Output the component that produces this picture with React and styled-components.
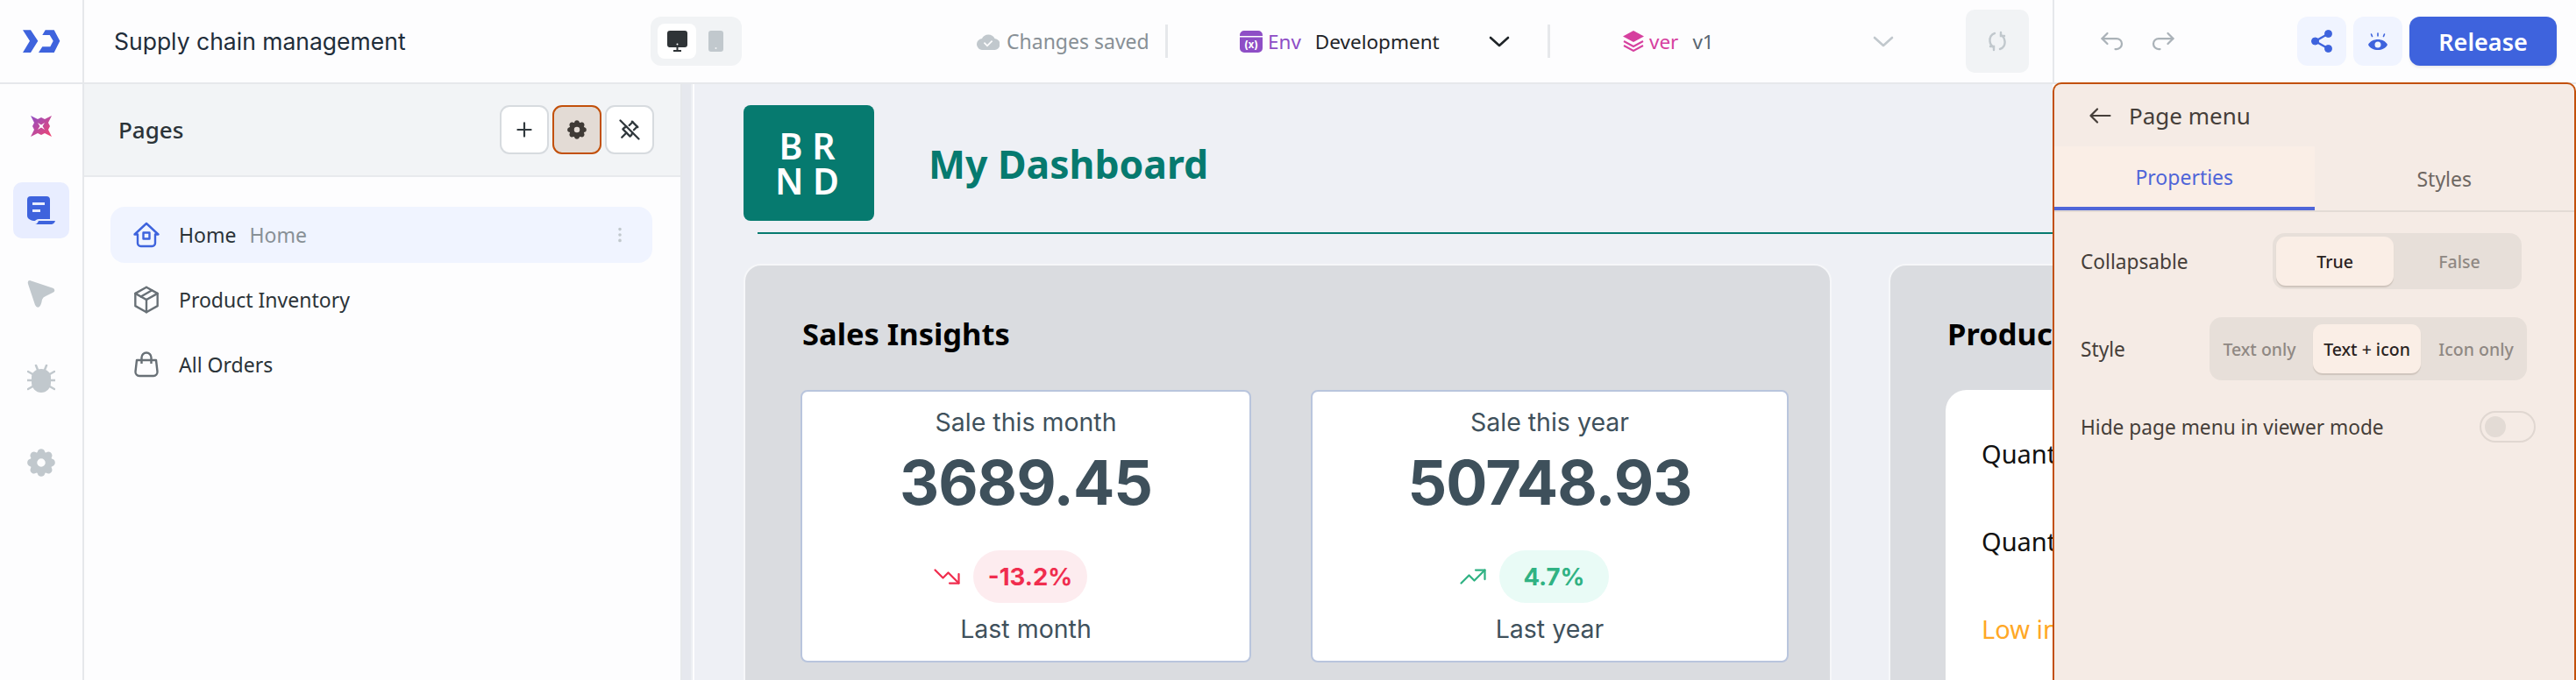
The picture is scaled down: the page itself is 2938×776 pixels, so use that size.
import React from "react";
import styled, { createGlobalStyle } from "styled-components";
import {
  TbPlus,
  TbSettingsFilled,
  TbPinnedOff,
  TbPackage,
  TbArrowBackUp,
  TbArrowForwardUp,
  TbTrendingUp,
  TbTrendingDown,
  TbDotsVertical,
} from "react-icons/tb";

const UI_FONT = `"Noto Sans", "Liberation Sans", sans-serif`;
const BLUE = "#3e63dd";
const TEAL = "#067a6f";

const Global = createGlobalStyle`
  html, body, #root {
    margin: 0;
    height: 100%;
    overflow: hidden;
  }
  body {
    font-family: ${UI_FONT};
    background: #fdfdfe;
  }
  * {
    box-sizing: border-box;
  }
`;

const Shell = styled.div`
  height: 776px;
  display: flex;
  flex-direction: column;
  overflow: hidden;
`;

const TopBar = styled.header`
  height: 96px;
  flex: none;
  display: flex;
  background: #fdfdfe;
  border-bottom: 2px solid #e6e8eb;
`;

const LogoCell = styled.div`
  width: 96px;
  flex: none;
  display: flex;
  align-items: center;
  justify-content: center;
  border-right: 2px solid #e6e8eb;
`;

const AppName = styled.div`
  width: 612px;
  margin-left: 34px;
  flex: none;
  align-self: center;
  font-family: Inter, sans-serif;
  font-size: 26.5px;
  color: #1f2d3a;
`;

const DeviceSwitch = styled.div`
  width: 104px;
  height: 56px;
  margin-top: 19px;
  padding: 8px;
  flex: none;
  display: flex;
  gap: 14px;
  align-items: center;
  background: #f1f3f5;
  border-radius: 12px;
`;

const DeviceTab = styled.div`
  width: ${(p) => (p.$active ? "44px" : "17px")};
  height: 40px;
  display: flex;
  align-items: center;
  justify-content: center;
  border-radius: 8px;
  background: ${(p) => (p.$active ? "#fff" : "transparent")};
`;

const SaveState = styled.div`
  margin-left: 268px;
  width: 215px;
  flex: none;
  display: flex;
  align-items: center;
  gap: 8px;
  font-size: 23px;
  color: #889096;
`;

const Divider = styled.div`
  width: 3px;
  height: 38px;
  flex: none;
  align-self: center;
  background: #e6e8eb;
`;

const EnvGroup = styled.div`
  margin: 0 ${(p) => p.$mr}px 0 ${(p) => p.$ml}px;
  width: ${(p) => p.$w}px;
  flex: none;
  display: flex;
  align-items: center;
  font-size: 22.5px;
  color: #1f2428;
`;

const EnvLabel = styled.span`
  margin: 0 ${(p) => p.$gap}px 0 6px;
  color: ${(p) => p.$color};
`;

const EnvValue = styled.span`
  flex: 1;
  color: ${(p) => p.$color};
`;

const SyncButton = styled.button`
  width: 72px;
  height: 72px;
  margin-top: 11px;
  padding: 0;
  flex: none;
  border: 0;
  border-radius: 10px;
  background: #f1f3f5;
  display: flex;
  align-items: center;
  justify-content: center;
`;

const Actions = styled.div`
  margin-left: 27px;
  flex: 1;
  display: flex;
  align-items: center;
  border-left: 2px solid #e6e8eb;
  padding-left: 47px;
  padding-right: 22px;
`;

const History = styled.div`
  display: flex;
  gap: 24px;
  margin-right: auto;
  color: #aab2b8;
`;

const SoftButton = styled.button`
  width: 56px;
  height: 56px;
  margin-right: 8px;
  padding: 0;
  border: 0;
  border-radius: 12px;
  background: #f0f4ff;
  display: flex;
  align-items: center;
  justify-content: center;
`;

const ReleaseButton = styled.button`
  width: 168px;
  height: 56px;
  padding: 0;
  border: 0;
  border-radius: 12px;
  background: ${BLUE};
  box-shadow: 0 2px 3px rgba(0, 0, 0, 0.08);
  color: #fff;
  font-family: ${UI_FONT};
  font-size: 27px;
  font-weight: 600;
`;

const Body = styled.div`
  flex: 1;
  min-height: 0;
  display: flex;
`;

const Rail = styled.nav`
  width: 96px;
  flex: none;
  padding-top: 16px;
  display: flex;
  flex-direction: column;
  align-items: center;
  gap: 32px;
  border-right: 2px solid #e6e8eb;
  background: #fdfdfe;
`;

const RailItem = styled.div`
  width: 64px;
  height: 64px;
  display: flex;
  align-items: center;
  justify-content: center;
  border-radius: 10px;
  background: ${(p) => (p.$active ? "#e8edff" : "transparent")};
`;

const PagesPanel = styled.aside`
  width: 682px;
  flex: none;
  display: flex;
  flex-direction: column;
  background: #fdfdfe;
  border-right: 2px solid #e6e8eb;
`;

const PagesHead = styled.div`
  height: 106px;
  flex: none;
  padding: 0 30px 0 39px;
  display: flex;
  align-items: center;
  gap: 4px;
  background: #f2f4f6;
  border-bottom: 2px solid #e8eaed;
`;

const PagesTitle = styled.div`
  margin-right: auto;
  font-size: 26px;
  font-weight: 500;
  color: #2b3338;
`;

const IconButton = styled.button`
  width: 56px;
  height: 56px;
  padding: 0;
  border-radius: 11px;
  border: 2px solid ${(p) => (p.$on ? "#c2500a" : "#d7dbdf")};
  background: ${(p) => (p.$on ? "#e3dbd5" : "#fff")};
  color: ${(p) => (p.$on ? "#3f3a36" : "#30383d")};
  display: flex;
  align-items: center;
  justify-content: center;
`;

const PageList = styled.div`
  padding: 34px 32px 34px 30px;
  display: flex;
  flex-direction: column;
  gap: 10px;
`;

const PageRow = styled.div`
  height: 64px;
  padding: 0 26px 0 25px;
  display: flex;
  align-items: center;
  border-radius: 16px;
  background: ${(p) => (p.$active ? "#f0f4ff" : "transparent")};
  color: ${(p) => (p.$active ? BLUE : "#687076")};
`;

const PageIcon = styled.span`
  width: 32px;
  height: 32px;
  flex: none;
  display: flex;
  align-items: center;
  justify-content: center;
`;

const PageName = styled.span`
  margin-left: 21px;
  font-size: 23px;
  color: #2b3338;
`;

const PageSlug = styled.span`
  margin-left: 15px;
  margin-right: auto;
  font-size: 23px;
  color: #889096;
`;

const Gutter = styled.div`
  width: 12px;
  flex: none;
  background: #e6e8ee;
  border-right: 2px solid #edeff3;
  margin-right: 2px;
`;

const Canvas = styled.main`
  flex: 1;
  min-width: 0;
  overflow: hidden;
  padding: 24px 0 0 56px;
  background: #eef0f5;
`;

const BrandRow = styled.div`
  display: flex;
  align-items: center;
  gap: 62px;
`;

const BrandMark = styled.div`
  width: 149px;
  height: 132px;
  flex: none;
  padding-right: 4px;
  display: flex;
  flex-direction: column;
  align-items: center;
  justify-content: center;
  border-radius: 8px;
  background: ${TEAL};
  color: #fff;
  font-size: 41px;
  font-weight: 600;
  line-height: 40px;
  white-space: pre;
`;

const BrandTitle = styled.div`
  font-size: 44.5px;
  font-weight: 700;
  color: ${TEAL};
`;

const BrandRule = styled.div`
  height: 2px;
  margin: 13px 0 34px 16px;
  background: ${TEAL};
`;

const CardRow = styled.div`
  display: flex;
  gap: 65px;
`;

const Card = styled.section`
  width: ${(p) => p.$w}px;
  height: 520px;
  flex: none;
  padding: 53px 50px 0 63px;
  border: 2px solid #f6f7f9;
  border-radius: 20px;
  background: #dadce0;
`;

const CardTitle = styled.h2`
  margin: 0 0 39px 2px;
  height: 50px;
  font-size: 34.5px;
  line-height: 50px;
  font-weight: 700;
  color: #000;
  white-space: nowrap;
`;

const StatRow = styled.div`
  display: flex;
  gap: 68px;
`;

const Stat = styled.div`
  width: ${(p) => p.$w}px;
  height: 311px;
  flex: none;
  padding-top: 14px;
  display: flex;
  flex-direction: column;
  align-items: center;
  border: 2px solid #b9c5dd;
  border-radius: 8px;
  background: #fff;
  font-family: Inter, sans-serif;
  color: #3f515c;
`;

const StatLabel = styled.div`
  font-size: 28.5px;
  line-height: 42px;
`;

const StatValue = styled.div`
  margin-top: 4px;
  font-size: 70px;
  line-height: 88px;
  font-weight: 700;
  letter-spacing: -1px;
  color: #3e505b;
`;

const Trend = styled.div`
  margin: 33px 38px 9px 0;
  height: 60px;
  display: flex;
  align-items: center;
  gap: 12px;
  color: ${(p) => p.$color};
`;

const Badge = styled.span`
  height: 60px;
  padding: 0 ${(p) => p.$pad}px;
  display: flex;
  align-items: center;
  border-radius: 30px;
  background: ${(p) => p.$bg};
  font-size: 27.5px;
  font-weight: 700;
`;

const StockCard = styled.div`
  width: 400px;
  height: 400px;
  padding: 51px 41px;
  display: flex;
  flex-direction: column;
  gap: 56px;
  border-radius: 24px;
  background: #fff;
`;

const StockLine = styled.div`
  font-size: 29px;
  line-height: 44px;
  white-space: nowrap;
  color: ${(p) => p.$color || "#111"};
`;

const Inspector = styled.aside`
  width: 597px;
  flex: none;
  margin-top: -2px;
  position: relative;
  display: flex;
  flex-direction: column;
  border: 2px solid #c2500a;
  border-bottom: 0;
  border-radius: 10px 10px 0 0;
  background: #f5ebe5;
  color: #453e39;
`;

const InspectorHead = styled.div`
  height: 71px;
  padding: 1px 0 0 40px;
  display: flex;
  align-items: center;
  gap: 20px;
  font-size: 26px;
`;

const Tabs = styled.div`
  height: 75px;
  display: flex;
  border-bottom: 2px solid #e3dbd5;
`;

const Tab = styled.div`
  width: 298px;
  height: 73px;
  padding-top: 1px;
  display: flex;
  align-items: center;
  justify-content: center;
  font-size: 23px;
  background: ${(p) => (p.$active ? "#faeee6" : "transparent")};
  border-bottom: ${(p) => (p.$active ? "4px solid #4f65d8" : "0")};
  color: ${(p) => (p.$active ? "#4f65d8" : "#6e6762")};
`;

const Field = styled.div`
  height: ${(p) => p.$h}px;
  margin-top: ${(p) => p.$mt}px;
  padding: 0 ${(p) => p.$pr}px 0 30px;
  display: flex;
  align-items: center;
  justify-content: space-between;
  font-size: 22.7px;
`;

const Segments = styled.div`
  width: ${(p) => p.$w}px;
  height: 100%;
  padding: ${(p) => p.$pad}px 4px;
  display: flex;
  align-items: stretch;
  border-radius: 14px;
  background: #e7dfd9;
`;

const Segment = styled.div`
  width: ${(p) => p.$w}px;
  padding: 0 ${(p) => p.$nudgeR || 0}px 0 ${(p) => p.$nudgeL || 0}px;
  display: flex;
  align-items: center;
  justify-content: center;
  border-radius: 11px;
  font-size: 19.5px;
  font-weight: 500;
  color: ${(p) => (p.$on ? "#2a231f" : "#8f8883")};
  background: ${(p) => (p.$on ? "#faeee6" : "transparent")};
  box-shadow: ${(p) => (p.$on ? "0 2px 1px #cfc5bd" : "none")};
`;

const Toggle = styled.div`
  width: 64px;
  height: 36px;
  padding: 4px;
  border: 2px solid #e0d7d1;
  border-radius: 18px;
`;

const Knob = styled.div`
  width: 24px;
  height: 24px;
  border-radius: 12px;
  background: #e3dbd5;
`;

const Logo = () => (
  <svg width="43" height="28" viewBox="0 0 43 28" fill={BLUE}>
    <path d="M0 1.300h9l8.300 12.400L9 27H0l8-13.300z" />
    <path d="M25.700 1.300h10l6.600 12.400L35.700 27H18l4.300-6.700h9l3.400-6.600-4-6.700h-8.400z" />
  </svg>
);

const SparkIcon = () => (
  <svg width="26" height="26" viewBox="0 0 26 26">
    <defs>
      <linearGradient id="spark" x1="0" y1="0" x2="1" y2="1">
        <stop offset="0" stopColor="#8e4ec6" />
        <stop offset="1" stopColor="#f3456f" />
      </linearGradient>
    </defs>
    <path
      fillRule="evenodd"
      fill="url(#spark)"
      d="M1 1L9 5L13 3L17 5L25 1L21 9L23 13L21 17L25 25L17 21L13 23L9 21L1 25L5 17L3 13L5 9ZM9 9L13 11.500L17 9L14.500 13L17 17L13 14.500L9 17L11.500 13Z"
    />
  </svg>
);

const ScrollIcon = () => (
  <svg width="32" height="32" viewBox="0 0 32 32" fill={BLUE}>
    <path
      fillRule="evenodd"
      d="M4 0h18a4 4 0 0 1 4 4v22H13c-2 0-3 1-4 2-4 0-9-2-9-6V4a4 4 0 0 1 4-4zm2 7v3h14V7zm0 8v3h9v-3z"
    />
    <path d="M13 28h19c-1 3-3 4-5 4H9c2 0 3-2 4-4z" />
  </svg>
);

const SendIcon = () => (
  <svg width="32" height="32" viewBox="0 0 32 32" fill="#c1c8cd">
    <path d="M3 0Q0 0 1 4L9 28Q11 32 14 30Q16 28 17 22Q18 19 21 18L29 14Q33 12 30 9Z" />
  </svg>
);

const BugIcon = () => (
  <svg width="32" height="32" viewBox="0 0 32 32" fill="#c1c8cd" stroke="#c1c8cd" strokeLinecap="round">
    <path stroke="none" d="M16 5c-6 0-11 4-11 9v7c0 6 5 11 11 11s11-5 11-11v-7c0-5-5-9-11-9z" />
    <path strokeWidth="2.5" fill="none" d="M10 1l2 5M22 1l-2 5M1 8l7 4M31 8l-7 4M0 18h7M32 18h-7M1 28l7-4M31 28l-7-4" />
  </svg>
);

const HomeIcon = () => (
  <svg width="30" height="30" viewBox="0 0 30 30" fill="none" stroke="currentColor" strokeWidth="2.4" strokeLinejoin="round">
    <path d="M1.500 14.500L15 2l13.500 12.500H25v10a3.500 3.500 0 0 1-3.500 3.500h-13A3.500 3.500 0 0 1 5 24.500v-10z" />
    <rect x="11.500" y="12.500" width="7" height="7" />
  </svg>
);

const BagIcon = () => (
  <svg width="28" height="30" viewBox="0 0 28 30" fill="none" stroke="currentColor" strokeWidth="2.4" strokeLinejoin="round">
    <path d="M3 10h22l1.500 13a4.500 4.500 0 0 1-4.500 5H6a4.500 4.500 0 0 1-4.500-5z" />
    <path d="M8.500 14V7a5.500 5.500 0 0 1 11 0v7" />
  </svg>
);

const DesktopIcon = () => (
  <svg width="23" height="24" viewBox="0 0 23 24" fill="#2f3437">
    <path fillRule="evenodd" d="M3 0h17a3 3 0 0 1 3 3v13a3 3 0 0 1-3 3H3a3 3 0 0 1-3-3V3a3 3 0 0 1 3-3zm8.500 14.500a1 1 0 1 0 0 2 1 1 0 0 0 0-2z" />
    <path d="M10.500 19h2v3h3.500v2H7v-2h3.500z" />
  </svg>
);

const PhoneIcon = () => (
  <svg width="17" height="24" viewBox="0 0 17 24" fill="#c1c8cd">
    <path fillRule="evenodd" d="M3 0h11a3 3 0 0 1 3 3v18a3 3 0 0 1-3 3H3a3 3 0 0 1-3-3V3a3 3 0 0 1 3-3zm5.500 19a1 1 0 1 0 0 2 1 1 0 0 0 0-2z" />
  </svg>
);

const CloudCheckIcon = () => (
  <svg width="26" height="20" viewBox="0 0 26 20" fill="#c1c8cd">
    <path fillRule="evenodd" d="M7 20a6.500 6.500 0 0 1-1-13 8 8 0 0 1 14.500 0 6.500 6.500 0 0 1-1 13zm10-11l-5 5-3-3-1.200 1.200L12 16.500l6.200-6.300z" />
  </svg>
);

const EnvIcon = () => (
  <svg width="26" height="25" viewBox="0 0 26 25">
    <path fill="#8e4ec6" d="M5 0h16a5 5 0 0 1 5 5v1H0V5a5 5 0 0 1 5-5zM0 7.500h26V20a5 5 0 0 1-5 5H5a5 5 0 0 1-5-5z" />
    <text x="13" y="20" fontSize="12" fontWeight="700" fill="#fff" textAnchor="middle" fontFamily="Inter, sans-serif">(x)</text>
  </svg>
);

const LayersIcon = () => (
  <svg width="24" height="24" viewBox="0 0 24 24" fill="none" stroke="#d6409f" strokeWidth="2">
    <path fill="#d6409f" stroke="none" d="M12 0l12 6.500L12 13 0 6.500z" />
    <path d="M1 12l11 6 11-6M1 17l11 6 11-6" />
  </svg>
);

const SyncIcon = () => (
  <svg width="24" height="24" viewBox="0 0 24 24" fill="none" stroke="#c1c8cd" strokeWidth="2.4" strokeLinecap="round">
    <path d="M9 3C5 4 3 8 3.500 12S6 18 8 19" />
    <path d="M15 21c4-1 6-5 5.500-9S18 6 16 5" />
    <path d="M4 18h4v4M20 6h-4V2" />
  </svg>
);

const ShareIcon = () => (
  <svg width="24" height="26" viewBox="0 0 24 26" fill={BLUE} stroke={BLUE}>
    <circle cx="4.500" cy="13" r="4" />
    <circle cx="19.500" cy="4.500" r="4" />
    <circle cx="19.500" cy="21.500" r="4" />
    <path fill="none" strokeWidth="2.400" d="M4.500 13l15-8.500M4.500 13l15 8.500" />
  </svg>
);

const EyeIcon = () => (
  <svg width="22" height="21" viewBox="0 0 22 21" fill="none">
    <path
      fillRule="evenodd"
      fill={BLUE}
      d="M0 14C4 6 18 6 22 14C18 22 4 22 0 14ZM11 10.500a3.500 3.500 0 1 0 0 7 3.500 3.500 0 0 0 0-7z"
    />
    <path stroke={BLUE} strokeWidth="1.600" strokeLinecap="round" d="M11 1v3M3.500 2l1 2.500M18.500 2l-1 2.500" />
  </svg>
);

const ChevronIcon = ({ color }) => (
  <svg width="24" height="13" viewBox="0 0 24 13" fill="none" stroke={color} strokeWidth="2.600" strokeLinecap="round" strokeLinejoin="round">
    <path d="M2 2l10 9 10-9" />
  </svg>
);

const BackArrowIcon = () => (
  <svg width="25" height="18" viewBox="0 0 25 18" fill="none" stroke="#453e39" strokeWidth="2.200" strokeLinecap="round" strokeLinejoin="round">
    <path d="M1.500 9h22M9 1.500L1.500 9 9 16.500" />
  </svg>
);

const STYLE_OPTIONS = [
  { label: "Text only", w: 114, nudgeR: 8 },
  { label: "Text + icon", w: 123, on: true },
  { label: "Icon only", w: 117, nudgeL: 9 },
];

const StatCard = ({ label, value, foot, width, color, bg, pad, pct, down }) => (
  <Stat $w={width}>
    <StatLabel>{label}</StatLabel>
    <StatValue>{value}</StatValue>
    <Trend $color={color}>
      {down ? <TbTrendingDown size={36} strokeWidth={1.5} /> : <TbTrendingUp size={36} strokeWidth={1.5} />}
      <Badge $bg={bg} $pad={pad}>{pct}</Badge>
    </Trend>
    <StatLabel>{foot}</StatLabel>
  </Stat>
);

const App = () => (
  <Shell>
    <Global />
    <TopBar>
      <LogoCell>
        <Logo />
      </LogoCell>
      <AppName>Supply chain management</AppName>
      <DeviceSwitch>
        <DeviceTab $active>
          <DesktopIcon />
        </DeviceTab>
        <DeviceTab>
          <PhoneIcon />
        </DeviceTab>
      </DeviceSwitch>
      <SaveState>
        <CloudCheckIcon />
        Changes saved
      </SaveState>
      <Divider />
      <EnvGroup $ml={82} $mr={43} $w={308}>
        <EnvIcon />
        <EnvLabel $color="#8e4ec6" $gap={16}>Env</EnvLabel>
        <EnvValue>Development</EnvValue>
        <ChevronIcon color="#1f2428" />
      </EnvGroup>
      <Divider />
      <EnvGroup $ml={83} $mr={82} $w={309}>
        <LayersIcon />
        <EnvLabel $color="#d6409f" $gap={16}>ver</EnvLabel>
        <EnvValue $color="#596570">v1</EnvValue>
        <ChevronIcon color="#c1c8cd" />
      </EnvGroup>
      <SyncButton>
        <SyncIcon />
      </SyncButton>
      <Actions>
        <History>
          <TbArrowBackUp size={36} strokeWidth={1.5} />
          <TbArrowForwardUp size={36} strokeWidth={1.5} />
        </History>
        <SoftButton>
          <ShareIcon />
        </SoftButton>
        <SoftButton>
          <EyeIcon />
        </SoftButton>
        <ReleaseButton>Release</ReleaseButton>
      </Actions>
    </TopBar>
    <Body>
      <Rail>
        <RailItem>
          <SparkIcon />
        </RailItem>
        <RailItem $active>
          <ScrollIcon />
        </RailItem>
        <RailItem>
          <SendIcon />
        </RailItem>
        <RailItem>
          <BugIcon />
        </RailItem>
        <RailItem>
          <TbSettingsFilled size={38} color="#c1c8cd" />
        </RailItem>
      </Rail>
      <PagesPanel>
        <PagesHead>
          <PagesTitle>Pages</PagesTitle>
          <IconButton>
            <TbPlus size={26} />
          </IconButton>
          <IconButton $on>
            <TbSettingsFilled size={26} />
          </IconButton>
          <IconButton>
            <TbPinnedOff size={28} />
          </IconButton>
        </PagesHead>
        <PageList>
          <PageRow $active>
            <PageIcon>
              <HomeIcon />
            </PageIcon>
            <PageName>Home</PageName>
            <PageSlug>Home</PageSlug>
            <TbDotsVertical size={22} color="#c1c8cd" />
          </PageRow>
          <PageRow>
            <PageIcon>
              <TbPackage size={38} strokeWidth={1.5} style={{ flex: "none" }} />
            </PageIcon>
            <PageName>Product Inventory</PageName>
          </PageRow>
          <PageRow>
            <PageIcon>
              <BagIcon />
            </PageIcon>
            <PageName>All Orders</PageName>
          </PageRow>
        </PageList>
      </PagesPanel>
      <Gutter />
      <Canvas>
        <BrandRow>
          <BrandMark>
            <span>B R</span>
            <span>N D</span>
          </BrandMark>
          <BrandTitle>My Dashboard</BrandTitle>
        </BrandRow>
        <BrandRule />
        <CardRow>
          <Card $w={1241}>
            <CardTitle>Sales Insights</CardTitle>
            <StatRow>
              <StatCard
                label="Sale this month"
                value="3689.45"
                foot="Last month"
                width={514}
                color="#f02d4e"
                bg="#fdecef"
                pad={17}
                pct="-13.2%"
                down
              />
              <StatCard
                label="Sale this year"
                value="50748.93"
                foot="Last year"
                width={545}
                color="#30b283"
                bg="#e9fbf6"
                pad={27}
                pct="4.7%"
              />
            </StatRow>
          </Card>
          <Card $w={800}>
            <CardTitle>Product Inventory</CardTitle>
            <StockCard>
              <StockLine>Quantity in stock</StockLine>
              <StockLine>Quantity sold</StockLine>
              <StockLine $color="#ffa826">Low inventory</StockLine>
            </StockCard>
          </Card>
        </CardRow>
      </Canvas>
      <Inspector>
        <InspectorHead>
          <BackArrowIcon />
          Page menu
        </InspectorHead>
        <Tabs>
          <Tab $active>Properties</Tab>
          <Tab>Styles</Tab>
        </Tabs>
        <Field $h={64} $mt={24} $pr={60}>
          Collapsable
          <Segments $w={284} $pad={4}>
            <Segment $on $w={134}>True</Segment>
            <Segment $w={142} $nudgeL={8}>False</Segment>
          </Segments>
        </Field>
        <Field $h={72} $mt={32} $pr={54}>
          Style
          <Segments $w={362} $pad={8}>
            {STYLE_OPTIONS.map((o) => (
              <Segment key={o.label} $on={o.on} $w={o.w} $nudgeL={o.nudgeL} $nudgeR={o.nudgeR}>{o.label}</Segment>
            ))}
          </Segments>
        </Field>
        <Field $h={36} $mt={35} $pr={44}>
          Hide page menu in viewer mode
          <Toggle>
            <Knob />
          </Toggle>
        </Field>
      </Inspector>
    </Body>
  </Shell>
);

export default App;
